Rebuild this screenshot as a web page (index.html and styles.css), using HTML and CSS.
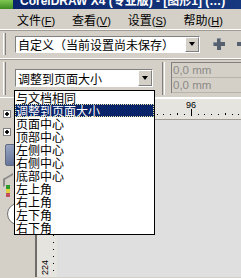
FILE: index.html
```html
<!DOCTYPE html>
<html>
<head>
<meta charset="utf-8">
<link rel="stylesheet" href="styles.css">
</head>
<body>
<div class="titlebar">
  <span class="app-icon"></span>
  <span class="title">CorelDRAW X4 (专业版) - [图形1] (…)</span>
</div>
<div class="menubar">
  <span class="menu-item">文件<span class="acc">(<u>F</u>)</span></span>
  <span class="menu-item">查看<span class="acc">(<u>V</u>)</span></span>
  <span class="menu-item">设置<span class="acc">(<u>S</u>)</span></span>
  <span class="menu-item">帮助<span class="acc">(<u>H</u>)</span></span>
</div>
<div class="toolbar tb1">
  <span class="grip"></span>
  <div class="combo combo-wide">
    <span class="combo-text">自定义（当前设置尚未保存）</span>
    <span class="combo-btn"><span class="tri"></span></span>
  </div>
  <svg class="tool-icon plus" width="14" height="14" viewBox="0 0 14 14">
    <path d="M5 1h4v4h4v4h-4v4h-4v-4h-4v-4h4z" fill="#56606e"/>
    <path d="M5 1h4v4h-1v-3h-3zM1 5h4v1h-3v3h-1z" fill="#8a93a0"/>
  </svg>
  <svg class="tool-icon minus" width="6" height="14" viewBox="0 0 6 14">
    <rect x="1" y="5" width="5" height="4" fill="#56606e"/>
  </svg>
</div>
<div class="toolbar tb2">
  <span class="grip tall"></span>
  <div class="combo combo-fit">
    <span class="combo-text">调整到页面大小</span>
    <span class="combo-btn"><span class="tri"></span></span>
    <ul class="dropdown">
      <li>与文档相同</li>
      <li class="selected">调整到页面大小</li>
      <li>页面中心</li>
      <li>顶部中心</li>
      <li>左侧中心</li>
      <li>右侧中心</li>
      <li>底部中心</li>
      <li>左上角</li>
      <li>右上角</li>
      <li>左下角</li>
      <li>右下角</li>
    </ul>
  </div>
  <span class="sep"></span>
  <div class="fields">
    <div class="field">0,0 mm</div>
    <div class="field">0,0 mm</div>
  </div>
</div>
<div class="workspace">
  <div class="toolbox">
    <span class="node-box"></span>
    <span class="node-box"></span>
    <span class="pick-icon"></span>
    <span class="shape-icon"></span>
    <span class="dots"><i class="g"></i><i class="y"></i><i class="r"></i></span>
    <span class="circle-icon"></span>
  </div>
  <div class="divider"></div>
  <div class="corner"></div>
  <div class="hruler">
    <svg width="184" height="22" viewBox="0 0 184 22">
      <g fill="#000">
        <rect x="93" y="15" width="1" height="1"/>
        <rect x="100" y="15" width="1" height="1"/>
        <rect x="106" y="15" width="1" height="1"/>
        <rect x="113" y="15" width="1" height="1"/>
        <rect x="120" y="14" width="1" height="2"/>
        <rect x="127" y="15" width="1" height="1"/>
        <rect x="134" y="10" width="1" height="7"/>
        <rect x="141" y="15" width="1" height="1"/>
        <rect x="147" y="15" width="1" height="1"/>
        <rect x="154" y="15" width="1" height="1"/>
        <rect x="161" y="15" width="1" height="1"/>
        <rect x="168" y="14" width="1" height="2"/>
        <rect x="175" y="15" width="1" height="1"/>
        <rect x="181" y="15" width="1" height="1"/>
      </g>
      <text x="134" y="9" text-anchor="middle" class="ruler-num">96</text>
    </svg>
  </div>
  <div class="vruler"><span class="vlabel">224</span></div>
  <div class="canvas"></div>
</div>
</body>
</html>
```
FILE: styles.css
```css
* { box-sizing: border-box; }
html, body { margin: 0; padding: 0; }
body {
  width: 241px;
  height: 278px;
  overflow: hidden;
  background: #d4d0c8;
  font-family: "Noto Sans CJK SC", sans-serif;
  font-size: 12px;
  color: #000;
}

/* title bar */
.titlebar {
  height: 9px;
  overflow: hidden;
  display: flex;
  align-items: flex-start;
  background: linear-gradient(90deg, #0a246a, #16387e);
}
.app-icon {
  width: 14px;
  height: 9px;
  flex: none;
  background: linear-gradient(180deg, #7ec850, #3e8a22);
  border-right: 1px solid #0a246a;
}
.title {
  margin-top: -5px;
  margin-left: 6px;
  white-space: nowrap;
  color: #fff;
  font-family: "Liberation Sans", "Noto Sans CJK SC", sans-serif;
  font-weight: bold;
  font-size: 12px;
  line-height: 12px;
}

/* menu */
.menubar {
  height: 21px;
  display: flex;
  align-items: center;
  gap: 17px;
  padding-left: 17px;
  padding-top: 2px;
  border-bottom: 1px solid #fff;
}
.menu-item {
  line-height: 12px;
  white-space: nowrap;
}
.acc {
  font-family: "Liberation Sans", sans-serif;
  font-size: 11px;
}

/* toolbars */
.toolbar {
  display: flex;
  align-items: center;
  padding-left: 3px;
  border-bottom: 1px solid #fff;
  box-shadow: 0 1px 0 #a09c94 inset;
}
.tb1 { height: 29px; }
.tb2 { height: 39px; }
.grip {
  width: 3px;
  height: 22px;
  flex: none;
  border-left: 1px solid #fff;
  border-right: 1px solid #808080;
  margin-right: 9px;
}
.grip.tall { height: 33px; }

.combo {
  position: relative;
  display: flex;
  align-items: center;
  background: #fff;
  border-top: 1px solid #808080;
  border-left: 1px solid #808080;
  border-right: 1px solid #fff;
  border-bottom: 1px solid #fff;
  flex: none;
}
.combo-wide { width: 185px; height: 17px; }
.combo-fit { width: 138px; height: 18px; }
.combo-text {
  flex: 1;
  padding-left: 2px;
  line-height: 13px;
  white-space: nowrap;
}
.combo-btn {
  width: 14px;
  height: 100%;
  flex: none;
  display: flex;
  align-items: center;
  justify-content: center;
  background: #d4d0c8;
  border-top: 1px solid #fff;
  border-left: 1px solid #fff;
  border-right: 1px solid #808080;
  border-bottom: 1px solid #808080;
}
.tri {
  width: 0;
  height: 0;
  border-left: 3.5px solid transparent;
  border-right: 3.5px solid transparent;
  border-top: 4px solid #000;
}

.tool-icon { flex: none; }
.plus { margin-left: 12px; }
.minus { margin-left: 10px; }

.sep {
  width: 3px;
  height: 33px;
  flex: none;
  margin-left: 9px;
  margin-right: 6px;
  border-left: 1px solid #808080;
  border-right: 1px solid #fff;
}
.fields {
  flex: 1;
  align-self: flex-start;
  margin-top: 3px;
  border-top: 1px solid #808080;
  border-left: 1px solid #808080;
  background: #d4d0c8;
}
.field {
  height: 15px;
  padding-left: 1px;
  border-bottom: 1px solid #b8b4ac;
  color: #8c8a86;
  font-family: "Liberation Sans", sans-serif;
  font-size: 11.5px;
  line-height: 15px;
}

/* dropdown list */
.dropdown {
  position: absolute;
  left: -2px;
  top: 20px;
  width: 141px;
  margin: 0;
  padding: 0;
  list-style: none;
  background: #fff;
  border: 1px solid #000;
  z-index: 5;
}
.dropdown li {
  height: 13px;
  line-height: 13px;
  padding-left: 1px;
  white-space: nowrap;
}
.dropdown li.selected {
  background: #0a246a;
  color: #fff;
  outline: 1px dotted #e8e4a0;
  outline-offset: -1px;
}

/* workspace */
.workspace {
  height: 179px;
  display: grid;
  grid-template-columns: 35px 2px 20px 1fr;
  grid-template-rows: 22px 1fr;
}
.toolbox {
  grid-row: 1 / 3;
  grid-column: 1;
  display: flex;
  flex-direction: column;
  align-items: flex-start;
  padding-top: 12px;
  padding-left: 3px;
  background: #d4d0c8;
}
.node-box {
  width: 8px;
  height: 8px;
  border: 1px solid #808080;
  background: #fff radial-gradient(circle, #000 0 1.5px, transparent 2px);
  margin-bottom: 10px;
}
.pick-icon {
  width: 16px;
  height: 22px;
  margin-top: -2px;
  margin-left: 2px;
  background: linear-gradient(160deg, #9aa6c4, #5c6c92);
  border: 1px solid #606a80;
  border-radius: 2px;
}
.shape-icon {
  width: 10px;
  height: 8px;
  margin-top: 10px;
  border-left: 2px solid #8a8a8a;
  border-top: 2px solid #8a8a8a;
  transform: skewY(-30deg);
}
.dots {
  display: flex;
  flex-direction: column;
  margin-left: 3px;
  margin-top: 1px;
}
.dots i {
  display: block;
  width: 4px;
  height: 4px;
}
.dots .g { background: #2c9a2c; }
.dots .y { background: #e0d040; }
.dots .r { background: #c05060; }
.circle-icon {
  width: 22px;
  height: 22px;
  margin-top: 6px;
  margin-left: 4px;
  border-radius: 50%;
  border: 1px solid #707070;
  background: #fff;
}
.divider {
  grid-row: 1 / 3;
  grid-column: 2;
  background: #6e6c68;
}
.corner {
  grid-row: 1;
  grid-column: 3;
  background: #e6e4de;
  border-bottom: 1px solid #a09c94;
}
.hruler {
  grid-row: 1;
  grid-column: 4;
  background: #e6e4de;
  border-top: 1px solid #fff;
  border-bottom: 1px solid #a09c94;
  overflow: hidden;
}
.hruler svg { display: block; }
.ruler-num {
  font-family: "Liberation Sans", sans-serif;
  font-size: 9px;
  fill: #000;
}
.vruler {
  grid-row: 2;
  grid-column: 3;
  display: flex;
  flex-direction: column;
  justify-content: flex-end;
  padding-bottom: 2px;
  padding-left: 4px;
  background:
    repeating-linear-gradient(180deg, #000 0 1px, transparent 1px 7px) 16px 3px / 1px 100% no-repeat,
    #e6e4de;
}
.vlabel {
  writing-mode: vertical-rl;
  transform: rotate(180deg);
  font-family: "Liberation Sans", sans-serif;
  font-size: 9px;
  line-height: 9px;
}
.canvas {
  grid-row: 2;
  grid-column: 4;
  background: #dfdfdf;
}
```
